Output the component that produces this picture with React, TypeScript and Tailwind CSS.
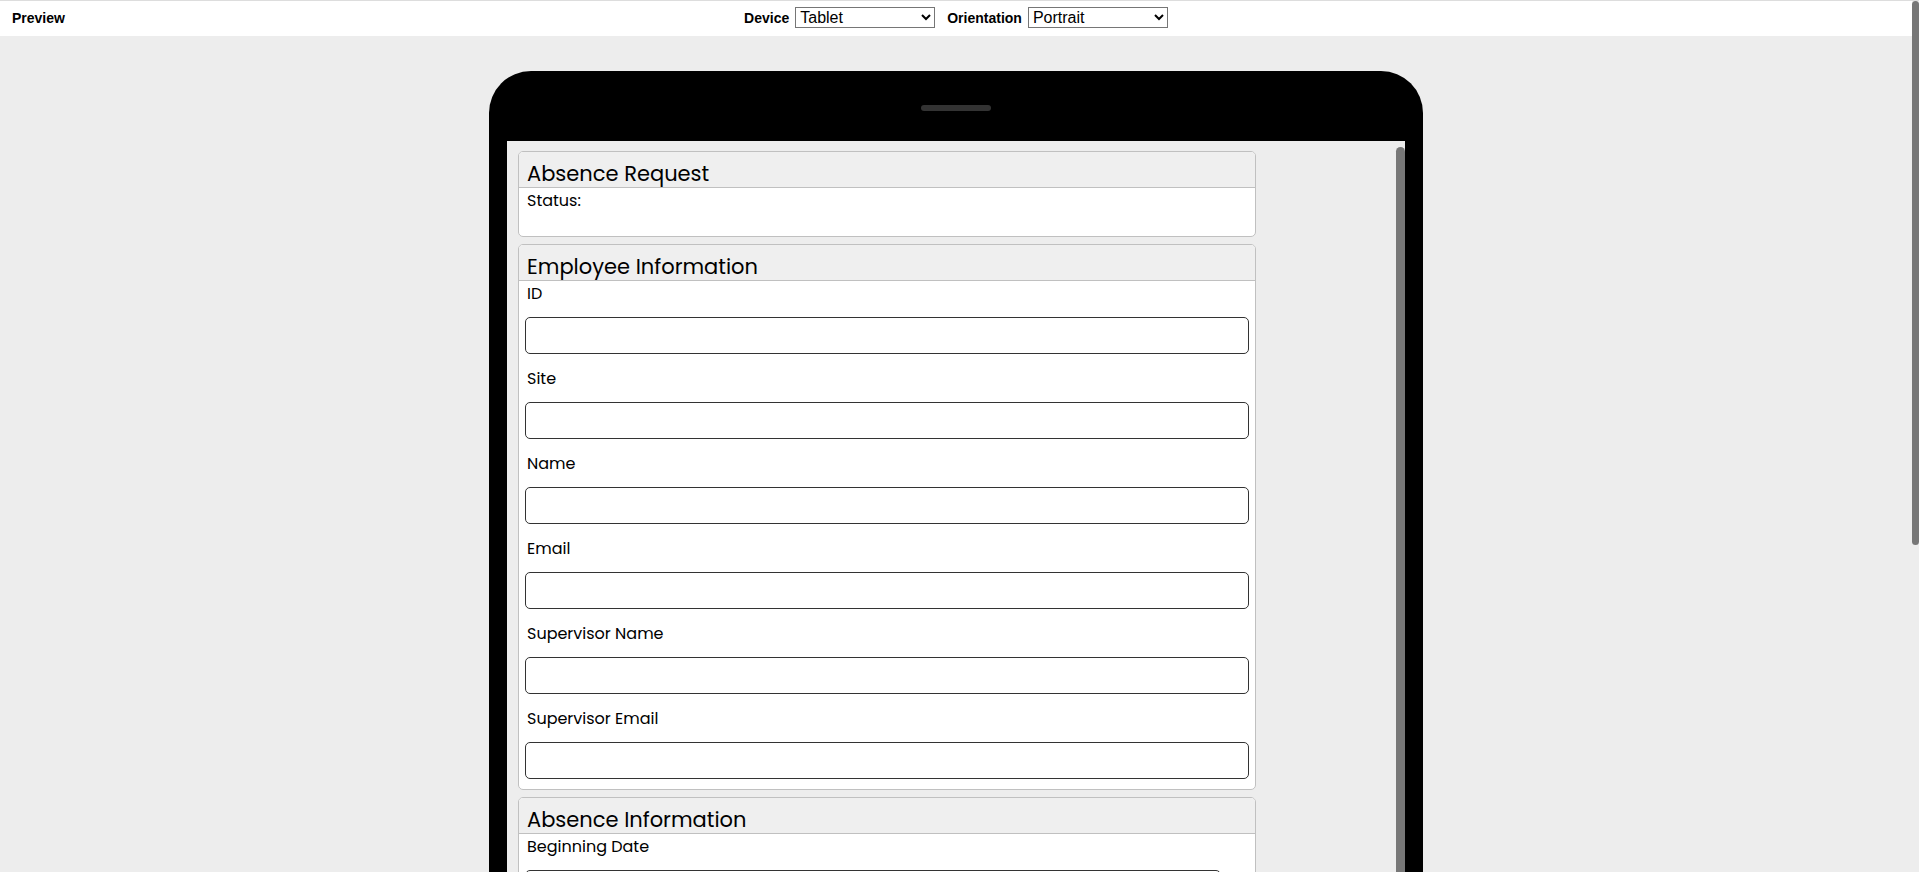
import { useState } from "react";

const employeeFields = ["ID", "Site", "Name", "Email", "Supervisor Name", "Supervisor Email"];

function Field({ label, width = "w-full" }: { label: string; width?: string }) {
  const id = label.toLowerCase().replace(/ /g, "-");

  return (
    <div>
      <label htmlFor={id} className="block pl-0.5 h-[36px] leading-[26px] text-base">
        {label}
      </label>
      <input
        id={id}
        type="text"
        className={`${width} block h-[37px] px-2 bg-white border border-[#333333] rounded-[5px]`}
      />
    </div>
  );
}

function Section({ title, children }: { title: string; children: React.ReactNode }) {
  return (
    <section className="bg-white border border-[#c0c0c0] rounded-[5px] overflow-hidden">
      <h2 className="h-[36px] pl-2 pt-[5px] bg-[#efefef] border-b border-[#c0c0c0] text-[21px] leading-[34px]">
        {title}
      </h2>
      <div className="flex flex-col gap-3 px-1.5 pb-2.5">{children}</div>
    </section>
  );
}

export default function App() {
  const [device, setDevice] = useState("Tablet");
  const [orientation, setOrientation] = useState("Portrait");

  return (
    <div className="flex h-screen overflow-hidden bg-[#ededed] border-t border-[#dddddd] text-black">
      <div className="flex flex-col flex-1 min-w-0">
        <header className="grid grid-cols-[1fr_auto_1fr] items-center shrink-0 h-[35px] px-3 pb-0.5 bg-white font-['Liberation_Sans',Arial,sans-serif] text-sm">
          <h1 className="font-bold">Preview</h1>
          <div className="flex items-center">
            <label htmlFor="device" className="font-bold mr-1.5">
              Device
            </label>
            <select
              id="device"
              value={device}
              onChange={(e) => setDevice(e.target.value)}
              className="w-[140px] h-[21px] mr-3 bg-white border border-[#767676] text-base leading-none"
            >
              <option>Phone</option>
              <option>Tablet</option>
              <option>Desktop</option>
            </select>
            <label htmlFor="orientation" className="font-bold mr-1.5">
              Orientation
            </label>
            <select
              id="orientation"
              value={orientation}
              onChange={(e) => setOrientation(e.target.value)}
              className="w-[140px] h-[21px] bg-white border border-[#767676] text-base leading-none"
            >
              <option>Portrait</option>
              <option>Landscape</option>
            </select>
          </div>
        </header>

        {/* Tablet frame */}
        <main className="flex flex-1 min-h-0 justify-center pt-[35px] px-4">
          <div className="flex flex-col w-full max-w-[934px] px-[18px] bg-black rounded-t-[42px]">
            <div className="flex justify-center shrink-0 h-[70px] pt-[34px]">
              <div className="w-[70px] h-1.5 bg-[#333333] rounded-full" />
            </div>
            <div className="flex flex-1 min-h-0 overflow-hidden bg-[#ededed] font-[Poppins,Inter,sans-serif]">
              <form className="flex-1 min-w-0 pl-[11px] pt-2.5">
                <div className="flex flex-col gap-[7px] w-full max-w-[738px]">
                  <Section title="Absence Request">
                    <p className="h-[38px] pl-0.5 text-base leading-[26px]">Status:</p>
                  </Section>
                  <Section title="Employee Information">
                    {employeeFields.map((label) => (
                      <Field key={label} label={label} />
                    ))}
                  </Section>
                  <Section title="Absence Information">
                    <Field label="Beginning Date" width="w-[696px]" />
                  </Section>
                </div>
              </form>
              <div className="w-[9px] mt-1.5 bg-[#777777] rounded-t-full" />
            </div>
          </div>
        </main>
      </div>
      <div className="w-[7px]">
        <div className="h-[544px] bg-[#777777] rounded-full" />
      </div>
    </div>
  );
}
